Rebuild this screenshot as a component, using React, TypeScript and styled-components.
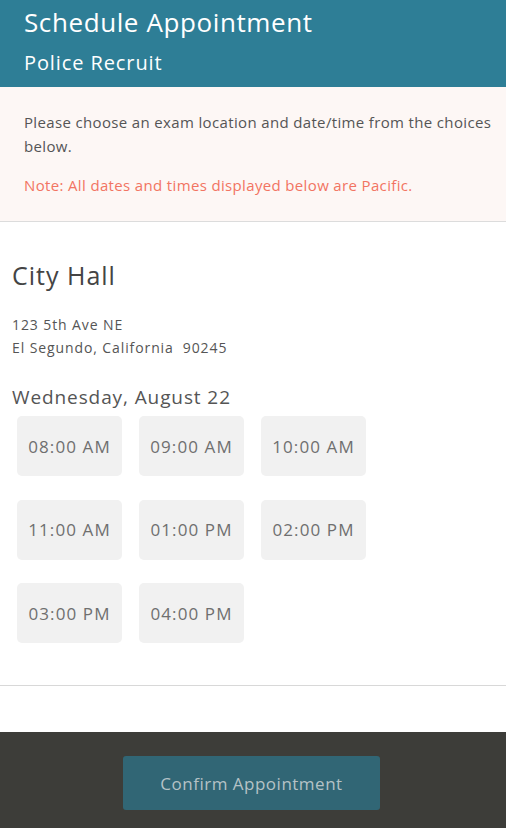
import styled, { createGlobalStyle } from 'styled-components';

const GlobalStyle = createGlobalStyle`
  body {
    margin: 0;
    background: #ffffff;
    font-family: "Open Sans", "Liberation Sans", sans-serif;
  }
`;

const Page = styled.div`
  width: 506px;
  min-height: 828px;
  display: flex;
  flex-direction: column;
`;

const Header = styled.header`
  background-color: #2e7e96;
  color: #ffffff;
  padding: 5px 20px 0 24px;
  height: 87px;
  box-sizing: border-box;
`;

const Title = styled.h1`
  margin: 0;
  font-size: 26px;
  font-weight: 400;
  line-height: 34px;
  letter-spacing: 0.6px;
`;

const Subtitle = styled.h2`
  margin: 10px 0 0;
  font-size: 20px;
  font-weight: 400;
  line-height: 28px;
  letter-spacing: 0.9px;
`;

const Notice = styled.div`
  background-color: #fdf7f5;
  border-bottom: 1px solid #dcdcdc;
  padding: 23px 6px 0 24px;
  height: 135px;
  box-sizing: border-box;
`;

interface NoticeTextProps {
  warn?: boolean;
}

const NoticeText = styled.p<NoticeTextProps>`
  margin: 0 0 15px;
  font-size: 15px;
  line-height: 24px;
  letter-spacing: 0.35px;
  color: ${(props) => (props.warn ? '#f27462' : '#555555')};
`;

const Location = styled.section`
  padding: 38px 12px 42px;
  border-bottom: 1px solid #d8d8d8;
`;

const LocationName = styled.h3`
  margin: 0 0 23px;
  font-size: 25px;
  font-weight: 400;
  color: #444444;
  line-height: 30px;
  letter-spacing: 1px;
`;

const Address = styled.div`
  font-size: 14px;
  line-height: 23px;
  color: #555555;
  letter-spacing: 0.9px;
  margin-bottom: 27px;
`;

const DayLabel = styled.h4`
  margin: 0;
  font-size: 19px;
  font-weight: 400;
  color: #555555;
  line-height: 22px;
  letter-spacing: 0.9px;
`;

const SlotGrid = styled.div`
  display: grid;
  grid-template-columns: repeat(3, 105px);
  column-gap: 17px;
  row-gap: 23.5px;
  padding: 8px 5px 0;
`;

const Slot = styled.button`
  height: 60px;
  border: none;
  border-radius: 5px;
  background-color: #f1f1f1;
  color: #6f6f6f;
  font-family: inherit;
  font-size: 17px;
  letter-spacing: 1.1px;
  cursor: pointer;
  padding: 0;
`;

const Spacer = styled.div`
  height: 46px;
`;

const Footer = styled.footer`
  background-color: #3d3d39;
  flex: 1;
  display: flex;
  justify-content: center;
  padding: 24px 3px 0 0;
  min-height: 96px;
  box-sizing: border-box;
`;

const ConfirmButton = styled.button`
  width: 257px;
  height: 54px;
  border: none;
  border-radius: 3px;
  background-color: #316675;
  color: #b5c2c6;
  font-family: inherit;
  font-size: 17px;
  letter-spacing: 0.5px;
  cursor: pointer;
`;

const times = [
  '08:00 AM', '09:00 AM', '10:00 AM',
  '11:00 AM', '01:00 PM', '02:00 PM',
  '03:00 PM', '04:00 PM',
];

export default function App() {
  return (
    <Page>
      <GlobalStyle />
      <Header>
        <Title>Schedule Appointment</Title>
        <Subtitle>Police Recruit</Subtitle>
      </Header>
      <Notice>
        <NoticeText>Please choose an exam location and date/time from the choices below.</NoticeText>
        <NoticeText warn>Note: All dates and times displayed below are Pacific.</NoticeText>
      </Notice>
      <Location>
        <LocationName>City Hall</LocationName>
        <Address>
          123 5th Ave NE
          <br />
          El Segundo, California&nbsp; 90245
        </Address>
        <DayLabel>Wednesday, August 22</DayLabel>
        <SlotGrid>
          {times.map((t) => (
            <Slot key={t}>{t}</Slot>
          ))}
        </SlotGrid>
      </Location>
      <Spacer />
      <Footer>
        <ConfirmButton>Confirm Appointment</ConfirmButton>
      </Footer>
    </Page>
  );
}
